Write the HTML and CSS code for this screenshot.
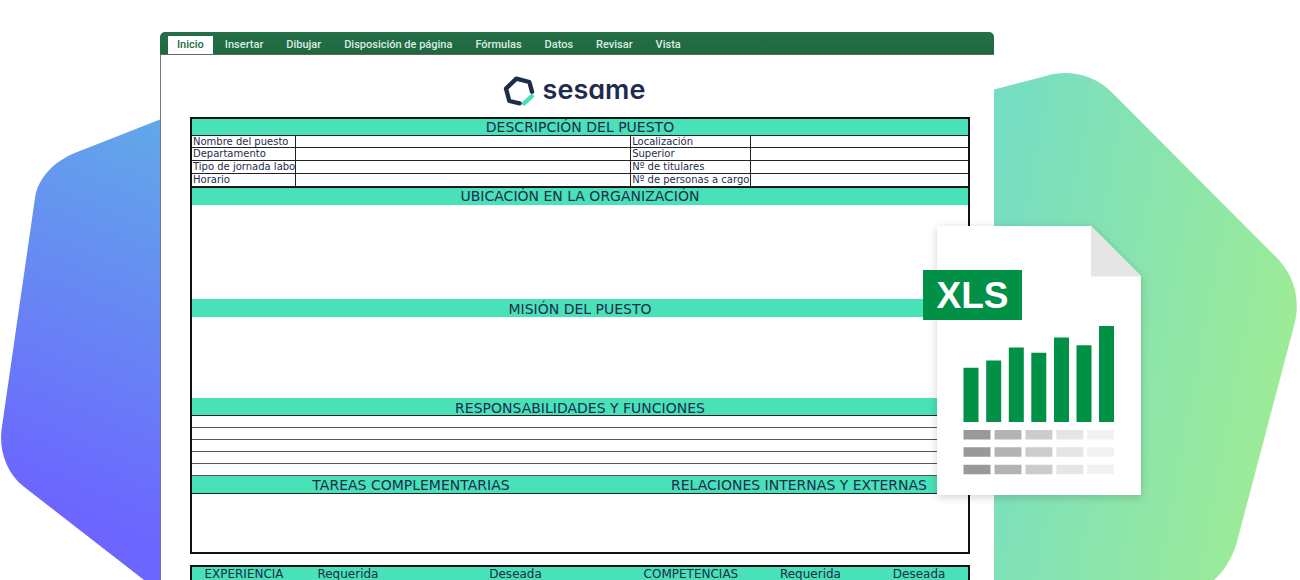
FILE: index.html
```html
<!DOCTYPE html>
<html lang="es">
<head>
<meta charset="utf-8">
<title>Descripción del puesto</title>
<link rel="stylesheet" href="styles.css">
</head>
<body>
<main class="scene">
  <svg class="blob blob-left" width="160" height="580" viewBox="0 0 160 580" aria-hidden="true">
    <defs>
      <linearGradient id="blue" gradientUnits="userSpaceOnUse" x1="190" y1="110" x2="30" y2="490">
        <stop offset="0" stop-color="#61ace7"/>
        <stop offset="1" stop-color="#6c66ff"/>
      </linearGradient>
    </defs>
    <path fill="url(#blue)" d="M160 119.500L76 152.500C54 161 38 178 35 198L1.500 430C-1 451 7 473 23 486L144 580H160Z"/>
  </svg>
  <svg class="blob blob-right" width="306" height="580" viewBox="994 0 306 580" aria-hidden="true">
    <defs>
      <linearGradient id="green" gradientUnits="userSpaceOnUse" x1="970" y1="260" x2="1290" y2="320">
        <stop offset="0" stop-color="#75ddc4"/>
        <stop offset="1" stop-color="#9ceb98"/>
      </linearGradient>
    </defs>
    <path fill="url(#green)" d="M994 89.500L1046 76C1069 69 1093 75 1110 90.500L1273 254C1292 271 1301 295 1295 322L1238 538C1234 555 1226 569 1214 580H994Z"/>
  </svg>

  <section class="window">
    <nav class="ribbon">
      <button class="tab tab-active">Inicio</button>
      <button class="tab">Insertar</button>
      <button class="tab">Dibujar</button>
      <button class="tab">Disposición de página</button>
      <button class="tab">Fórmulas</button>
      <button class="tab">Datos</button>
      <button class="tab">Revisar</button>
      <button class="tab">Vista</button>
    </nav>
    <div class="sheet">
      <header class="brand">
        <svg width="32" height="30" viewBox="40 34 96 90" fill="none" stroke-width="13" stroke-linecap="round" stroke-linejoin="round" aria-hidden="true">
          <path stroke="#1e2c4c" d="M127 81L119 52L80 42L49 72L59 109L90 116"/>
          <path stroke="#46e1b9" d="M103 116L126 95"/>
        </svg>
        <span class="brand-name">sesame</span>
      </header>

      <div class="form">
        <h2 class="band band-first">DESCRIPCIÓN DEL PUESTO</h2>
        <table class="fields">
          <colgroup><col class="c-label"><col class="c-value"><col class="c-label2"><col></colgroup>
          <tr><th>Nombre del puesto</th><td></td><th>Localización</th><td></td></tr>
          <tr><th>Departamento</th><td></td><th>Superior</th><td></td></tr>
          <tr><th>Tipo de jornada labo</th><td></td><th>Nº de titulares</th><td></td></tr>
          <tr><th>Horario</th><td></td><th>Nº de personas a cargo</th><td></td></tr>
        </table>
        <h2 class="band band-second">UBICACIÓN EN LA ORGANIZACIÓN</h2>
        <div class="space space-large"></div>
        <h2 class="band">MISIÓN DEL PUESTO</h2>
        <div class="space space-medium"></div>
        <h2 class="band band-lined">RESPONSABILIDADES Y FUNCIONES</h2>
        <div class="line"></div>
        <div class="line"></div>
        <div class="line"></div>
        <div class="line"></div>
        <div class="line"></div>
        <div class="split">
          <h2 class="band band-split">TAREAS COMPLEMENTARIAS</h2>
          <h2 class="band band-split">RELACIONES INTERNAS Y EXTERNAS</h2>
        </div>
        <div class="space space-small"></div>
      </div>

      <div class="form">
        <table class="skills">
          <colgroup><col class="c-label"><col class="c-label"><col class="c-wide"><col class="c-label2"><col class="c-label2"><col></colgroup>
          <tr><th>EXPERIENCIA</th><th>Requerida</th><th>Deseada</th><th>COMPETENCIAS</th><th>Requerida</th><th>Deseada</th></tr>
        </table>
      </div>
    </div>
  </section>

  <div class="file">
    <svg class="file-page" width="204" height="269" viewBox="937 226 204 269" aria-hidden="true">
      <path fill="#fff" d="M937 226H1091L1141 276V495H937Z"/>
      <path fill="#e5e5e5" d="M1091 226L1141 276.500H1091Z"/>
      <g fill="#009147">
        <path d="M963.500 367.700h15V422h-15zM986.200 360.500h15V422h-15zM1008.800 347.600h15V422h-15zM1031.300 352.700h15V422h-15zM1054 337.500h15V422h-15zM1076.500 345.300h15V422h-15zM1099 326h15V422h-15z"/>
      </g>
      <path fill="#999" d="M963.500 430h27v9.500h-27zM963.500 447.300h27v9.500h-27zM963.500 464.700h27v9.500h-27z"/>
      <path fill="#b3b3b3" d="M994.500 430h27v9.500h-27zM994.500 447.300h27v9.500h-27zM994.500 464.700h27v9.500h-27z"/>
      <path fill="#ccc" d="M1025.400 430h27v9.500h-27zM1025.400 447.300h27v9.500h-27zM1025.400 464.700h27v9.500h-27z"/>
      <path fill="#e5e5e5" d="M1056.300 430h27v9.500h-27zM1056.300 447.300h27v9.500h-27zM1056.300 464.700h27v9.500h-27z"/>
      <path fill="#f2f2f2" d="M1087.200 430h27v9.500h-27zM1087.200 447.300h27v9.500h-27zM1087.200 464.700h27v9.500h-27z"/>
    </svg>
    <span class="file-badge">XLS</span>
  </div>
</main>
</body>
</html>
```
FILE: styles.css
```css
* { box-sizing: border-box; }
body { margin: 0; background: #fff; }

.scene {
  position: relative;
  height: 100vh;
  min-height: 580px;
  padding: 32px 306px 0 160px;
  overflow: hidden;
}
.blob { position: absolute; top: 0; }
.blob-left { left: 0; }
.blob-right { right: 0; }

.window {
  height: 100%;
  border-radius: 5px 5px 0 0;
  overflow: hidden;
}
.ribbon {
  display: flex;
  gap: 1px;
  height: 23px;
  padding: 4px 8px 0;
  background: linear-gradient(#257049, #1f683f);
  border-bottom: 1px solid #5c6b62;
}
.tab {
  border: 0;
  padding: 0 11px;
  background: none;
  color: #dcebe2;
  font: 500 11px/16px Roboto, sans-serif;
  white-space: nowrap;
}
.tab-active {
  padding: 0 9px;
  background: #fff;
  color: #206b43;
}

.sheet {
  height: 100%;
  padding: 0 24px 0 29px;
  background: #fff;
  border-left: 1px solid #77797d;
  color: #1e2c4c;
  font-family: "DejaVu Sans", Verdana, sans-serif;
}
.brand {
  display: flex;
  justify-content: center;
  align-items: center;
  gap: 8px;
  height: 62px;
  padding: 10px 12px 0 0;
}
.brand-name {
  font: 600 27px/32px Inter, sans-serif;
  font-feature-settings: "cv11";
  padding-bottom: 2px;
}

.form { border: 2px solid #111; margin-bottom: 11px; }
.band {
  margin: 0;
  height: 18px;
  background: #48e1b8;
  font-size: 14px;
  font-weight: 400;
  line-height: 20px;
  text-align: center;
  white-space: nowrap;
}
.band-first { height: 16px; line-height: 16px; }
.band-second { height: 17px; line-height: 17px; }
.band-lined, .band-split { border-bottom: 1px solid #222; }
.band-split { line-height: 18px; }

table { width: 100%; table-layout: fixed; border-collapse: separate; border-spacing: 0; }
.c-label { width: 13.4%; }
.c-value { width: 43.2%; }
.c-label2 { width: 15.4%; }
.c-wide { width: 29.8%; }
.fields { border-top: 1px solid #222; border-bottom: 1px solid #111; }
.fields th, .fields td {
  height: 13px;
  padding: 0 0 0 1px;
  border: solid #222;
  border-width: 0 1px 1px 0;
  font-size: 10px;
  font-weight: 400;
  line-height: 12px;
  text-align: left;
  white-space: nowrap;
}
.fields tr:first-child > * { height: 12px; line-height: 11px; }
.fields td:last-child { border-right: 0; }

.space-large { height: 94px; }
.space-medium { height: 81px; }
.space-small { height: 58px; }
.line { height: 12px; border-bottom: 1px solid #555; }
.split { display: grid; grid-template-columns: 438fr 338fr; }

.skills th {
  height: 18px;
  padding: 0;
  background: #48e1b8;
  font-size: 12px;
  font-weight: 400;
  line-height: 14px;
  vertical-align: top;
}

.file { position: absolute; top: 226px; right: 159px; }
.file-page { display: block; filter: drop-shadow(0 2px 4px rgba(0, 0, 0, .18)); }
.file-badge {
  position: absolute;
  top: 44px;
  left: -14px;
  width: 99px;
  padding-top: 1px;
  background: #009147;
  color: #fff;
  font: 700 37px/49px "Liberation Sans", Arial, sans-serif;
  text-align: center;
}
```
